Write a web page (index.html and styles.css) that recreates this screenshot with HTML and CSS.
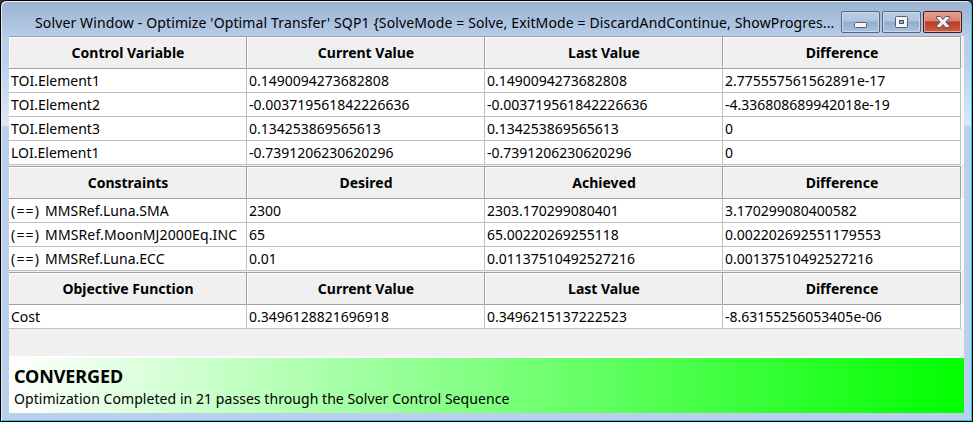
FILE: index.html
```html
<!DOCTYPE html>
<html lang="en">
<head>
<meta charset="utf-8">
<title>Solver Window</title>
<link rel="stylesheet" href="styles.css">
</head>
<body>
<div class="window">
  <header class="titlebar">
    <h1 class="title">Solver Window - Optimize 'Optimal Transfer' SQP1 {SolveMode = Solve, ExitMode = DiscardAndContinue, ShowProgres...</h1>
    <div class="controls">
      <button class="control" aria-label="Minimize"><svg width="37" height="20" viewBox="0 0 37 20"><rect x="12.5" y="10.5" width="12" height="5" rx="1" fill="#f6f6f6" stroke="#555f6d"/></svg></button>
      <button class="control" aria-label="Maximize"><svg width="37" height="20" viewBox="0 0 37 20"><rect x="12.5" y="4.500" width="12" height="11" rx="1" fill="#f6f6f6" stroke="#555f6d"/><rect x="16.500" y="8.500" width="4" height="3" fill="#92aecd" stroke="#465467"/></svg></button>
      <button class="control close" aria-label="Close"><svg width="37" height="20" viewBox="0 0 37 20"><path d="M12.500 4.500h4l2.500 3 2.500-3h4v1.500L21.800 10l3.700 4v1.500h-4L19 12.500l-2.500 3h-4V14l3.700-4-3.700-4z" fill="#f4f4f4" stroke="#59505a" stroke-linejoin="round"/></svg></button>
    </div>
  </header>
  <main class="content">
    <div class="grid">
      <div class="row head"><div>Control Variable</div><div>Current Value</div><div>Last Value</div><div>Difference</div></div>
      <div class="row"><div>TOI.Element1</div><div>0.1490094273682808</div><div>0.1490094273682808</div><div>2.775557561562891e-17</div></div>
      <div class="row"><div>TOI.Element2</div><div>-0.003719561842226636</div><div>-0.003719561842226636</div><div>-4.336808689942018e-19</div></div>
      <div class="row"><div>TOI.Element3</div><div>0.134253869565613</div><div>0.134253869565613</div><div>0</div></div>
      <div class="row"><div>LOI.Element1</div><div>-0.7391206230620296</div><div>-0.7391206230620296</div><div>0</div></div>
    </div>
    <div class="grid">
      <div class="row head"><div>Constraints</div><div>Desired</div><div>Achieved</div><div>Difference</div></div>
      <div class="row"><div><span class="relation">(==) </span>MMSRef.Luna.SMA</div><div>2300</div><div>2303.170299080401</div><div>3.170299080400582</div></div>
      <div class="row"><div><span class="relation">(==) </span><span class="wide">MMSRef.MoonMJ2000Eq.INC</span></div><div>65</div><div>65.00220269255118</div><div>0.002202692551179553</div></div>
      <div class="row"><div><span class="relation">(==) </span>MMSRef.Luna.ECC</div><div>0.01</div><div>0.01137510492527216</div><div>0.00137510492527216</div></div>
    </div>
    <div class="grid">
      <div class="row head"><div>Objective Function</div><div>Current Value</div><div>Last Value</div><div>Difference</div></div>
      <div class="row"><div>Cost</div><div>0.3496128821696918</div><div>0.3496215137222523</div><div>-8.63155256053405e-06</div></div>
    </div>
    <section class="status">
      <h2>CONVERGED</h2>
      <p>Optimization Completed in 21 passes through the Solver Control Sequence</p>
    </section>
  </main>
</div>
</body>
</html>
```
FILE: styles.css
```css
* { box-sizing: border-box; }
body {
  margin: 0;
  background: #30313a;
  font-family: "Noto Sans", "Open Sans", sans-serif;
  font-size: 14px;
  color: #000;
}
.window {
  width: 973px;
  height: 422px;
  padding: 0 7px 7px;
  border: 1px solid #000;
  border-radius: 6px 6px 0 0;
  background:
    linear-gradient(#9ab3d1 0, #b7cde8 36px, #b9d1ea 60px, #dbe7f4 124px, #b9d1ea 126px, #b9d1ea 100%);
  box-shadow: inset 1px 1px 0 #e5eef8, inset -1px -1px 0 #28c8ee;
}
.titlebar {
  height: 35px;
  display: flex;
  align-items: flex-start;
  justify-content: space-between;
  padding: 0 3px 0 27px;
}
.title {
  margin: 0;
  padding-top: 12px;
  font-size: 14px;
  line-height: 19px;
  font-weight: 400;
  white-space: nowrap;
  letter-spacing: 0.13px;
}
.controls {
  display: flex;
  gap: 2px;
  padding-top: 10px;
}
.control {
  width: 39px;
  height: 22px;
  padding: 0;
  border: 1px solid #56677d;
  border-radius: 2px;
  background: linear-gradient(#b9cde4 0, #aec5df 45%, #91aecd 50%, #a9c3e1 100%);
  box-shadow: inset 0 0 0 1px #c9d9eb;
}
.control svg { display: block; }
.close {
  border-color: #45141c;
  background: linear-gradient(#e5a094 0, #d6806f 45%, #b93a22 50%, #cb6247 100%);
  box-shadow: inset 0 0 0 1px #e5a89c;
}
.content {
  width: 955px;
  height: 377px;
  margin-left: 1px;
  display: flex;
  flex-direction: column;
  background: #f0f0f0;
}
.grid { margin-bottom: 2px; }
.row {
  display: grid;
  grid-template-columns: repeat(4, 238px);
  height: 24px;
  background: #fff;
}
.row > div {
  padding: 1px 2px 0;
  border-right: 1px solid #c0c0c0;
  border-bottom: 1px solid #c0c0c0;
  line-height: 23px;
  white-space: nowrap;
}
.relation { letter-spacing: 1.2px; }
.wide { letter-spacing: 0.13px; }
.row.head {
  height: 32px;
  background: #f0f0f0;
}
.row.head > div {
  padding: 0 0 0 1px;
  border: solid #a0a0a0;
  border-width: 1px 1px 1px 0;
  box-shadow: inset 1px 1px 0 #fff;
  line-height: 31px;
  font-weight: 700;
  text-align: center;
}
.status {
  height: 57px;
  margin-top: auto;
  padding: 6px 5px 0;
  border-top: 2px solid #fff;
  background: linear-gradient(90deg, #fff, #0f0);
}
.status h2 {
  margin: 0;
  font-size: 18px;
  line-height: 24px;
  letter-spacing: -0.1px;
}
.status p {
  margin: 0;
  line-height: 21px;
  letter-spacing: 0.06px;
}
```
